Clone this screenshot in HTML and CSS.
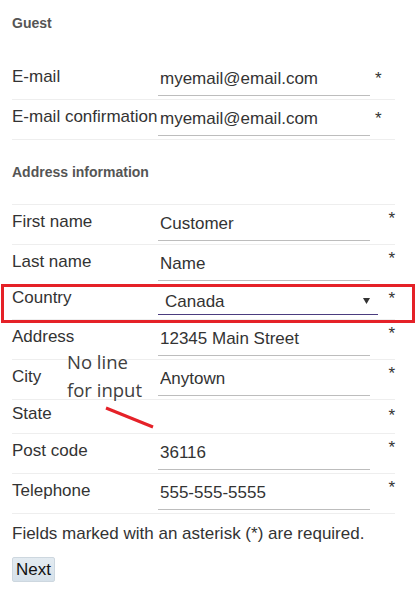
FILE: index.html
```html
<!DOCTYPE html>
<html lang="en">
<head>
<meta charset="utf-8">
<title>Checkout</title>
<link rel="stylesheet" href="styles.css">
</head>
<body>
<div class="page">
  <h2 class="section-title section-title--first">Guest</h2>
  <div class="group group--guest">
    <div class="row row--first">
      <label class="label">E-mail</label>
      <input class="field" type="text" value="myemail@email.com">
      <span class="req req--inline">*</span>
    </div>
    <div class="row">
      <label class="label">E-mail confirmation</label>
      <input class="field" type="text" value="myemail@email.com">
      <span class="req req--inline">*</span>
    </div>
  </div>

  <h2 class="section-title">Address information</h2>
  <div class="group group--address">
    <div class="row">
      <label class="label">First name</label>
      <input class="field" type="text" value="Customer">
      <span class="req">*</span>
    </div>
    <div class="row">
      <label class="label">Last name</label>
      <input class="field" type="text" value="Name">
      <span class="req">*</span>
    </div>
    <div class="row row--select row--highlight">
      <label class="label label--select">Country</label>
      <div class="select-wrap">
        <select class="select">
          <option>Canada</option>
        </select>
        <svg class="select-arrow" width="7" height="6" viewBox="0 0 7 6"><polygon points="0,0 7,0 3.5,6" fill="#333"/></svg>
      </div>
      <span class="req req--select">*</span>
    </div>
    <div class="row">
      <label class="label">Address</label>
      <input class="field" type="text" value="12345 Main Street">
      <span class="req">*</span>
    </div>
    <div class="row">
      <label class="label">City</label>
      <input class="field" type="text" value="Anytown">
      <span class="req">*</span>
    </div>
    <div class="row row--state">
      <label class="label label--state">State</label>
      <span class="empty"></span>
      <span class="req req--state">*</span>
    </div>
    <div class="row">
      <label class="label">Post code</label>
      <input class="field" type="text" value="36116">
      <span class="req">*</span>
    </div>
    <div class="row">
      <label class="label">Telephone</label>
      <input class="field" type="text" value="555-555-5555">
      <span class="req">*</span>
    </div>
  </div>

  <p class="note">Fields marked with an asterisk (*) are required.</p>
  <button class="btn" type="button">Next</button>

  <div class="annotation">No line<br>for input</div>
  <svg class="annotation-line" width="415" height="590" viewBox="0 0 415 590"><line x1="106" y1="408" x2="153" y2="427" stroke="#e52128" stroke-width="3"/></svg>
</div>
</body>
</html>
```

FILE: styles.css
```css
html, body {
  margin: 0;
  padding: 0;
  background: #fff;
}

body {
  font-family: "Liberation Sans", Arial, sans-serif;
  font-size: 17px;
  color: #333;
}

.page {
  margin-left: 12px;
  width: 383px;
  overflow: visible;
}

.section-title {
  margin: 24px 0 0;
  font-size: 14px;
  line-height: 16px;
  font-weight: bold;
  color: #555;
}

.section-title--first {
  margin-top: 15px;
}

.group {
  border-bottom: 1px solid #eee;
}

.group--guest {
  margin-top: 28px;
}

.group--address {
  margin-top: 24px;
  border-top: 1px solid #eee;
}

.row {
  display: grid;
  grid-template-columns: 146px 212px 1fr;
  align-items: start;
  height: 40px;
  box-sizing: border-box;
  border-top: 1px solid #eee;
}

.group--address .row:first-child {
  border-top: 0;
  height: 39px;
}

.row--first {
  border-top-color: transparent;
}

.row--select {
  height: 35px;
}

.row--state {
  height: 34px;
}

.label {
  padding-top: 7px;
  line-height: 19px;
  white-space: nowrap;
}

.label--select {
  padding-top: 3px;
}

.label--state {
  padding-top: 4px;
}

.field {
  display: block;
  width: 212px;
  height: 34px;
  box-sizing: border-box;
  margin: 2px 0 0;
  padding: 0 2px;
  border: 0;
  border-bottom: 1px solid #bdbdbd;
  background: transparent;
  font: inherit;
  color: #333;
  outline: none;
}

.req {
  padding-top: 4px;
  line-height: 19px;
  text-align: right;
}

.req--inline {
  padding-top: 9px;
  padding-left: 5px;
  text-align: left;
}

.req--state {
  padding-top: 6px;
}

.select-wrap {
  position: relative;
  width: 220px;
  margin-top: 3px;
}

.select {
  display: block;
  width: 220px;
  height: 27px;
  box-sizing: border-box;
  margin: 0;
  padding: 0 0 0 7px;
  border: 0;
  border-bottom: 1px solid #4b3d7f;
  border-radius: 0;
  background: transparent;
  font: inherit;
  color: #333;
  -webkit-appearance: none;
  appearance: none;
  outline: none;
}

.select-arrow {
  position: absolute;
  right: 8px;
  top: 10px;
  pointer-events: none;
}

.row--highlight {
  position: relative;
}

.row--highlight::after {
  content: "";
  position: absolute;
  left: -11px;
  right: -20px;
  top: -1px;
  bottom: -4px;
  border: 3px solid #e52128;
  pointer-events: none;
}

.note {
  margin: 10px 0 0;
  line-height: 19px;
}

.btn {
  display: block;
  margin-top: 14px;
  width: 43px;
  height: 25px;
  box-sizing: border-box;
  padding: 0 0 0 3px;
  text-align: left;
  font: inherit;
  line-height: 19px;
  color: #111;
  background: linear-gradient(#e3ebf1, #d6e1ea);
  border: 1px solid #cdd7df;
  border-radius: 2px;
}

.annotation {
  position: absolute;
  left: 67px;
  top: 348px;
  font-family: "Open Sans", sans-serif;
  font-size: 18.5px;
  line-height: 28px;
  color: #404040;
}

.annotation-line {
  position: absolute;
  left: 0;
  top: 0;
  pointer-events: none;
}
```
